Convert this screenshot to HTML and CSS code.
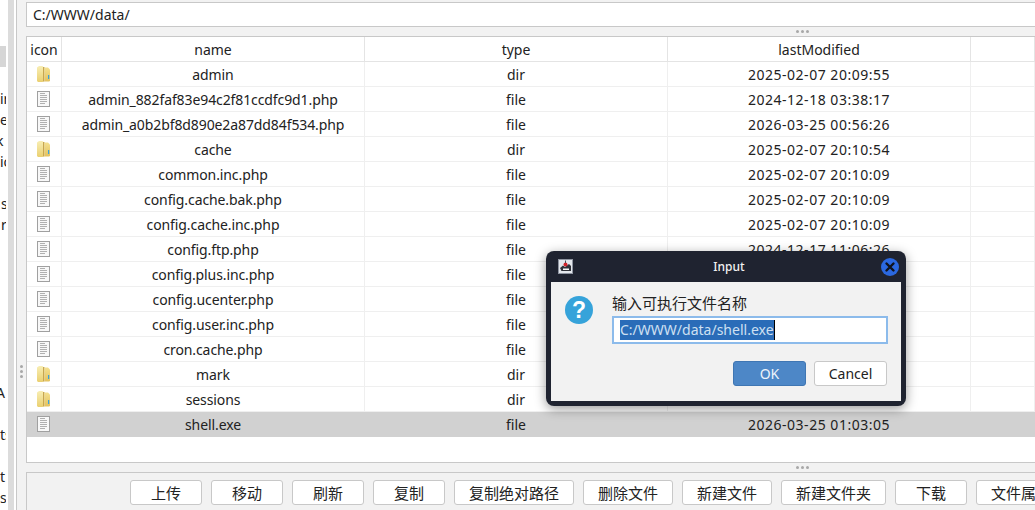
FILE: index.html
```html
<!DOCTYPE html>
<html lang="zh">
<head>
<meta charset="utf-8">
<title>Input</title>
<link rel="stylesheet" href="styles.css">
</head>
<body>
<svg class="defs" width="0" height="0" aria-hidden="true">
  <defs>
    <linearGradient id="fold-l" x1="0" y1="0" x2="0" y2="1">
      <stop offset="0" stop-color="#f8eeb4"/><stop offset="1" stop-color="#ead071"/>
    </linearGradient>
    <linearGradient id="fold-r" x1="0" y1="0" x2="0" y2="1">
      <stop offset="0" stop-color="#f4e08f"/><stop offset="1" stop-color="#e3c25f"/>
    </linearGradient>
  </defs>
  <symbol id="folder" viewBox="0 0 13 16">
    <path d="M0 1.5 L2 0 H5.5 L6.5 1 V15.5 L5.5 16 H1 L0 15 Z" fill="url(#fold-l)"/>
    <path d="M6 1 H7.5 V15.5 H6 Z" fill="#c7a64f"/>
    <path d="M7.5 1.5 H11 L13 3.5 V15 L12 15.5 H7.5 Z" fill="url(#fold-r)"/>
    <path d="M11 9 h1.2 v4 h-1.2 z" fill="#3aa2dc"/>
  </symbol>
  <symbol id="file" viewBox="0 0 13 16">
    <rect x="0.5" y="0.5" width="12" height="15" fill="#f8f8f8" stroke="#a0a0a0"/>
    <path d="M3 2.5h5M3 4.5h7M3 6.5h7M3 8.5h7M3 10.5h7M3 12.5h5" stroke="#b0b0b0" stroke-width="1"/>
  </symbol>
</svg>

<div class="app">
  <aside class="tree">
    <div class="tree-rows">
      <div class="tree-row tree-sel"></div>
      <div class="tree-row"></div>
      <div class="tree-row">ir</div>
      <div class="tree-row">e</div>
      <div class="tree-row tree-cut">k</div>
      <div class="tree-row">ic</div>
      <div class="tree-row"></div>
      <div class="tree-row tree-in">s</div>
      <div class="tree-row tree-in">r</div>
      <div class="tree-row"></div>
      <div class="tree-row"></div>
      <div class="tree-row"></div>
      <div class="tree-row"></div>
      <div class="tree-row"></div>
      <div class="tree-row"></div>
      <div class="tree-row"></div>
      <div class="tree-row tree-cut">A</div>
      <div class="tree-row"></div>
      <div class="tree-row">ts</div>
      <div class="tree-row"></div>
      <div class="tree-row">t</div>
      <div class="tree-row">s</div>
    </div>
    <div class="tree-scroll"></div>
  </aside>

  <div class="v-split"><i></i><i></i><i></i></div>

  <main class="main">
    <div class="path-box">C:/WWW/data/</div>
    <div class="h-split"><i></i><i></i><i></i></div>

    <div class="table-box">
      <table class="files">
        <colgroup>
          <col class="c-icon"><col class="c-wide"><col class="c-wide"><col class="c-wide"><col>
        </colgroup>
        <thead>
          <tr><th>icon</th><th>name</th><th>type</th><th>lastModified</th><th></th></tr>
        </thead>
        <tbody>
          <tr><td><svg class="ic-folder"><use href="#folder"/></svg></td><td class="fname">admin</td><td>dir</td><td class="date">2025-02-07 20:09:55</td><td></td></tr>
          <tr><td><svg class="ic-file"><use href="#file"/></svg></td><td class="fname">admin_882faf83e94c2f81ccdfc9d1.php</td><td>file</td><td class="date">2024-12-18 03:38:17</td><td></td></tr>
          <tr><td><svg class="ic-file"><use href="#file"/></svg></td><td class="fname">admin_a0b2bf8d890e2a87dd84f534.php</td><td>file</td><td class="date">2026-03-25 00:56:26</td><td></td></tr>
          <tr><td><svg class="ic-folder"><use href="#folder"/></svg></td><td class="fname">cache</td><td>dir</td><td class="date">2025-02-07 20:10:54</td><td></td></tr>
          <tr><td><svg class="ic-file"><use href="#file"/></svg></td><td class="fname">common.inc.php</td><td>file</td><td class="date">2025-02-07 20:10:09</td><td></td></tr>
          <tr><td><svg class="ic-file"><use href="#file"/></svg></td><td class="fname">config.cache.bak.php</td><td>file</td><td class="date">2025-02-07 20:10:09</td><td></td></tr>
          <tr><td><svg class="ic-file"><use href="#file"/></svg></td><td class="fname">config.cache.inc.php</td><td>file</td><td class="date">2025-02-07 20:10:09</td><td></td></tr>
          <tr><td><svg class="ic-file"><use href="#file"/></svg></td><td class="fname">config.ftp.php</td><td>file</td><td class="date">2024-12-17 11:06:26</td><td></td></tr>
          <tr><td><svg class="ic-file"><use href="#file"/></svg></td><td class="fname">config.plus.inc.php</td><td>file</td><td></td><td></td></tr>
          <tr><td><svg class="ic-file"><use href="#file"/></svg></td><td class="fname">config.ucenter.php</td><td>file</td><td></td><td></td></tr>
          <tr><td><svg class="ic-file"><use href="#file"/></svg></td><td class="fname">config.user.inc.php</td><td>file</td><td></td><td></td></tr>
          <tr><td><svg class="ic-file"><use href="#file"/></svg></td><td class="fname">cron.cache.php</td><td>file</td><td></td><td></td></tr>
          <tr><td><svg class="ic-folder"><use href="#folder"/></svg></td><td class="fname">mark</td><td>dir</td><td></td><td></td></tr>
          <tr><td><svg class="ic-folder"><use href="#folder"/></svg></td><td class="fname">sessions</td><td>dir</td><td></td><td></td></tr>
          <tr class="selected"><td><svg class="ic-file"><use href="#file"/></svg></td><td class="fname">shell.exe</td><td>file</td><td class="date">2026-03-25 01:03:05</td><td></td></tr>
        </tbody>
      </table>
    </div>

    <div class="h-split"><i></i><i></i><i></i></div>

    <div class="actions">
      <button class="btn">上传</button>
      <button class="btn">移动</button>
      <button class="btn">刷新</button>
      <button class="btn">复制</button>
      <button class="btn">复制绝对路径</button>
      <button class="btn">删除文件</button>
      <button class="btn">新建文件</button>
      <button class="btn">新建文件夹</button>
      <button class="btn">下载</button>
      <button class="btn">文件属性</button>
    </div>
  </main>
</div>

<div class="dialog">
  <header class="dlg-title">
    <svg class="java-icon" viewBox="0 0 15 15" aria-hidden="true">
      <rect width="15" height="15" fill="#e4e7ec"/>
      <rect x="0.5" y="0.5" width="14" height="14" fill="none" stroke="#8e94a0"/>
      <path d="M2 9 L5 6.5 L7 8 L11 5 L13 7 V12 H3.5 Z" fill="#2f3138"/>
      <path d="M5 9.5 H11 V11 H5 Z" fill="#f6f6f6"/>
      <circle cx="7.5" cy="5.5" r="2" fill="#d3232a"/>
      <path d="M7.5 1.5 V4" stroke="#4a4d55"/>
    </svg>
    <span class="dlg-name">Input</span>
    <span class="dlg-close">
      <svg viewBox="0 0 18 18" aria-hidden="true"><path d="M5.5 5.5 L12.5 12.5 M12.5 5.5 L5.5 12.5" stroke="#10131c" stroke-width="2.4" stroke-linecap="round"/></svg>
    </span>
  </header>
  <div class="dlg-body">
    <div class="dlg-content">
      <span class="q-icon">?</span>
      <div class="dlg-fields">
        <label class="dlg-label">输入可执行文件名称</label>
        <div class="dlg-input"><span class="dlg-selected">C:/WWW/data/shell.exe</span></div>
      </div>
    </div>
    <div class="dlg-buttons">
      <button class="btn dlg-btn dlg-ok">OK</button>
      <button class="btn dlg-btn">Cancel</button>
    </div>
  </div>
</div>
</body>
</html>
```

FILE: styles.css
```css
* { box-sizing: border-box; }
html, body { margin: 0; height: 100%; }
body {
  overflow: hidden;
  background: #f2f2f2;
  color: #222;
  font: 14px "Noto Sans", "Noto Sans CJK SC", sans-serif;
}
.defs { display: block; position: absolute; }
.app { display: flex; width: 1035px; height: 510px; }

.tree { display: flex; width: 17px; background: #fff; flex: none; border-right: 1px solid #c8c8c8; }
.tree-rows { width: 6px; padding-top: 46px; overflow: hidden; flex: none; }
.tree-row {
  height: 21px;
  line-height: 21px;
  width: 6px;
  white-space: nowrap;
  font-size: 14px;
}
.tree-sel { background: #d6d6d6; }
.tree-cut { margin-left: -4px; width: 10px; }
.tree-in { padding-left: 1px; }
.tree-scroll { width: 6px; margin-left: 2px; flex: none; background: #dcdcdc; }

.v-split { width: 9px; flex: none; display: flex; flex-direction: column; align-items: center; gap: 2px; padding-top: 365px; }
.v-split i, .h-split i { display: block; width: 3px; height: 3px; border-radius: 50%; background: #a8a8a8; }

.main { flex: 1; min-width: 0; display: flex; flex-direction: column; }
.path-box {
  height: 25px;
  margin-top: 2px;
  padding-left: 6px;
  line-height: 24px;
  background: #fff;
  border: 1px solid #c8c8c8;
  border-right: 0;
}
.h-split { height: 9px; flex: none; display: flex; justify-content: center; align-items: center; gap: 2px; padding-left: 544px; }

.table-box {
  height: 427px;
  flex: none;
  background: #fff;
  border: 1px solid #c8c8c8;
  border-right: 0;
  overflow: hidden;
}
.files { width: 1008px; table-layout: fixed; border-collapse: separate; border-spacing: 0; }
.c-icon { width: 35px; }
.c-wide { width: 303px; }
.files th, .files td {
  height: 25px;
  padding: 2px 0 0;
  text-align: center;
  font-weight: 400;
  white-space: nowrap;
  border-right: 1px solid #efefef;
  border-bottom: 1px solid #efefef;
  line-height: 22px;
}
.files th { border-right-color: #e4e4e4; border-bottom-color: #e4e4e4; }
.files svg { display: block; margin: 0 auto; }
.ic-folder { width: 13px; height: 16px; position: relative; left: -1px; top: -1px; }
.ic-file { width: 13px; height: 16px; position: relative; left: -1px; top: -1px; }
.fname { letter-spacing: -0.1px; }
.date { letter-spacing: 0.52px; }
.selected td { background: #d1d1d1; border-color: #d1d1d1; }

.actions {
  flex: 1;
  min-height: 0;
  display: flex;
  gap: 9px;
  padding: 7px 0 0 103px;
  border: 1px solid #c8c8c8;
  border-right: 0;
  border-bottom: 0;
  overflow: hidden;
  font-size: 15px;
}
.btn {
  flex: none;
  min-width: 72px;
  height: 25px;
  padding: 0 14px;
  background: #fff;
  color: #222;
  border: 1px solid #c8c8c8;
  border-radius: 3px;
  font: inherit;
  line-height: 22px;
}

.dialog {
  position: absolute;
  left: 546px;
  top: 251px;
  width: 360px;
  height: 155px;
  display: flex;
  flex-direction: column;
  background: #1f2330;
  border-radius: 8px;
  padding: 0 5px 5px;
  box-shadow: 0 3px 12px rgba(0,0,0,.4);
}
.dlg-title { height: 31px; flex: none; display: flex; align-items: center; justify-content: center; position: relative; padding-left: 6px; }
.dlg-name { color: #f2f2f2; font-size: 12px; font-weight: 500; }
.java-icon { position: absolute; left: 7px; top: 8px; width: 15px; height: 15px; }
.dlg-close {
  position: absolute;
  right: 2px;
  top: 7px;
  width: 18px;
  height: 18px;
  border-radius: 50%;
  background: #2b68e0;
}
.dlg-close svg { display: block; width: 18px; height: 18px; }
.dlg-body { flex: 1; background: #f2f2f2; display: flex; flex-direction: column; padding: 14px 14px 0 14px; }
.dlg-content { display: flex; gap: 19px; }
.q-icon {
  flex: none;
  width: 28px;
  height: 28px;
  border-radius: 50%;
  background: #36a3da;
  color: #fff;
  font: 700 23px/28px "Liberation Sans", sans-serif;
  text-align: center;
}
.dlg-fields { display: flex; flex-direction: column; flex: 1; }
.dlg-label { line-height: 16px; height: 20px; color: #222; margin-top: -1px; font-size: 15px; }
.dlg-input {
  width: 276px;
  height: 28px;
  margin-top: 1px;
  padding: 2px 6px;
  background: #fff;
  border: 2px solid #8cbbeb;
  line-height: 20px;
}
.dlg-selected { display: inline-block; height: 20px; background: #2a6cb8; color: #cfe0f2; border-right: 1px solid #000; }
.dlg-buttons { display: flex; justify-content: flex-end; gap: 8px; padding-top: 17px; font-size: 14px; }
.dlg-btn { width: 73px; min-width: 0; padding: 0; }
.dlg-ok { background: #4d87c7; border-color: #3f76b3; color: #eef4fb; }
```
